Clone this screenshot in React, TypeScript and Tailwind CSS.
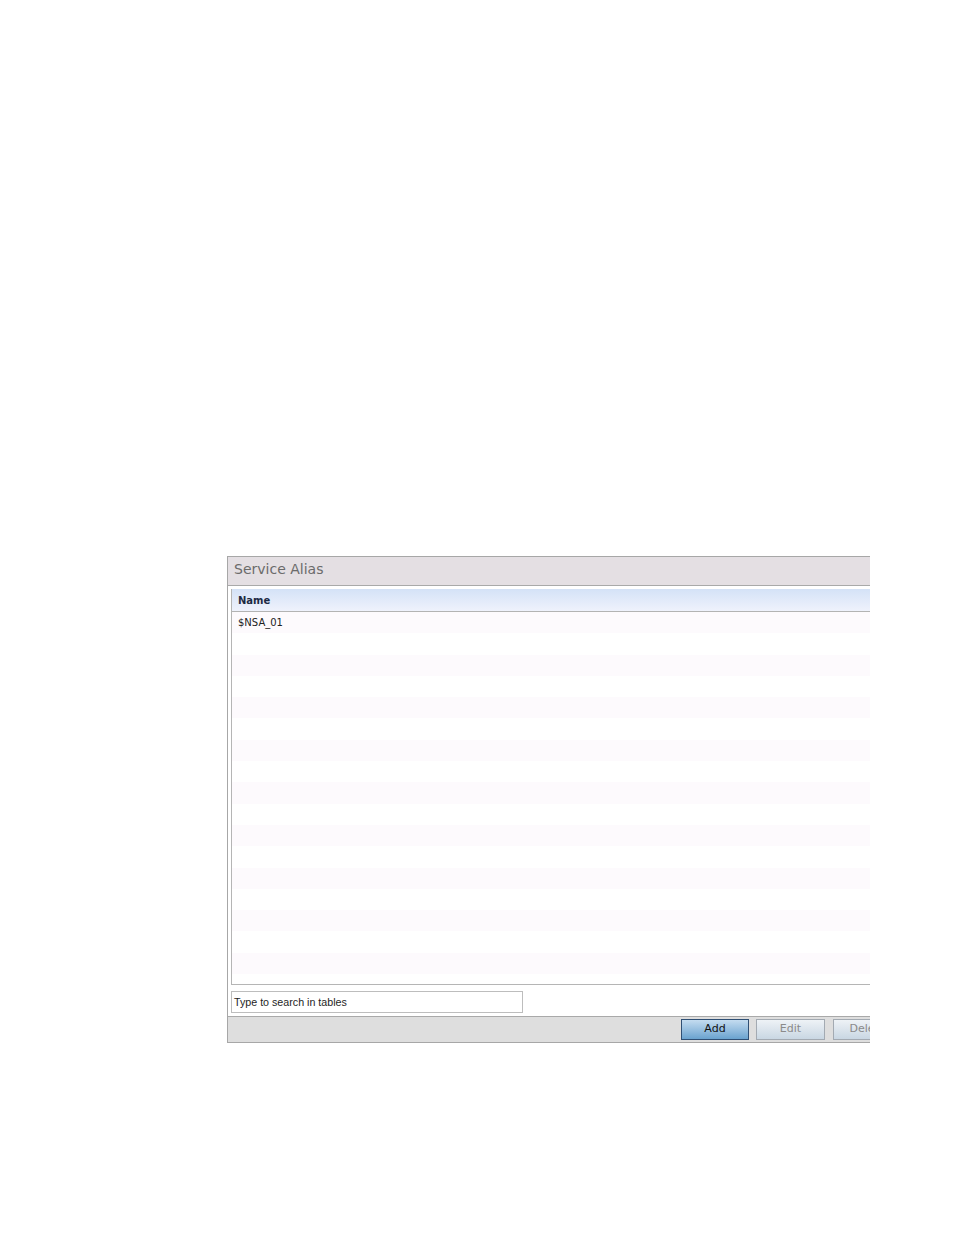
import React from "react";

const ROWS = ["$NSA_01", ...Array(17).fill("")];

function ServiceAliasPanel() {
  return (
    <div className="w-[643px] overflow-hidden">
      <div className="w-[720px] border-l border-t border-b border-[#a7a7a7] bg-white">
        <div className="h-[29px] bg-[#e4dfe3] border-b border-[#a9a9a9] flex items-center pl-[6px] pb-[3px]">
          <span className="text-[14px] text-[#6b6b6b] font-['DejaVu_Sans',sans-serif]">Service Alias</span>
        </div>
        <div className="pt-[3px] pl-[3px] bg-white">
          <div className="border-l border-b border-[#b5b5b5] h-[396px] flex flex-col overflow-hidden">
            <div className="h-[23px] shrink-0 bg-gradient-to-b from-[#d4e2f7] to-[#eff2fc] border-b border-[#b3b3b3] flex items-center pl-[6px]">
              <span className="text-[10px] font-bold text-[#1c2a44] font-['DejaVu_Sans',sans-serif]">Name</span>
            </div>
            {ROWS.map((r, i) => (
              <div
                key={i}
                className={`h-[21.3px] shrink-0 flex items-center pl-[6px] ${i % 2 === 0 ? "bg-[#fdfafd]" : "bg-white"}`}
              >
                <span className="text-[10px] text-[#222] font-['DejaVu_Sans',sans-serif]">{r}</span>
              </div>
            ))}
          </div>
          <div className="pt-[6px] pb-[3px]">
            <div className="w-[292px] h-[22px] border border-[#bdbdbd] flex items-center pl-[2px]">
              <span className="text-[10.7px] text-[#1e1e1e] font-['Liberation_Sans',sans-serif]">Type to search in tables</span>
            </div>
          </div>
        </div>
        <div className="h-[26px] bg-[#dedede] border-t border-[#a9a9a9] flex items-center pl-[453px] gap-[7px]">
          <div className="w-[68px] h-[21px] border border-[#2f4f74] bg-gradient-to-b from-[#c4dcf0] to-[#6aa3cf] flex items-center justify-center">
            <span className="text-[11px] text-[#111] font-['DejaVu_Sans',sans-serif]">Add</span>
          </div>
          <div className="w-[69px] h-[21px] border border-[#a3aab2] bg-gradient-to-b from-[#eef2f6] to-[#c9d7e3] flex items-center justify-center">
            <span className="text-[11px] text-[#8a8a8a] font-['DejaVu_Sans',sans-serif]">Edit</span>
          </div>
          <div className="ml-[1px] w-[69px] h-[21px] border border-[#a3aab2] bg-gradient-to-b from-[#eef2f6] to-[#c9d7e3] flex items-center justify-center">
            <span className="text-[11px] text-[#8a8a8a] font-['DejaVu_Sans',sans-serif]">Delete</span>
          </div>
        </div>
      </div>
    </div>
  );
}

export default function App() {
  return (
    <div className="w-[954px] h-[1235px] bg-white pt-[556px] pl-[227px]">
      <ServiceAliasPanel />
    </div>
  );
}
